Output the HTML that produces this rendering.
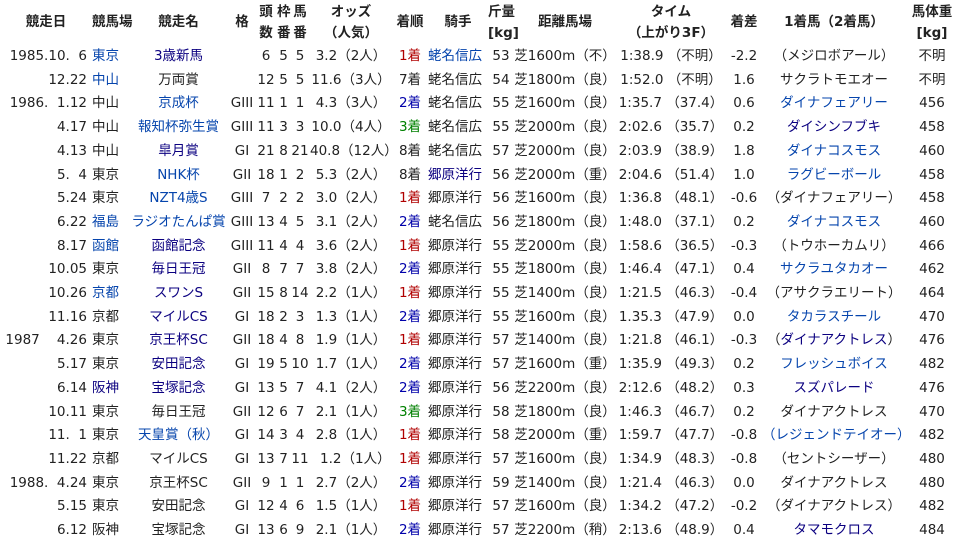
<!DOCTYPE html>
<html><head><meta charset="utf-8"><style>
body{margin:0;background:#fff;font-family:"DejaVu Sans","Noto Sans CJK JP",sans-serif;font-size:13.5px;color:#222;}
table{border-collapse:collapse;table-layout:fixed;width:958px;}
td,th{padding:0;white-space:nowrap;overflow:visible;text-align:center;}
th{height:45px;font-weight:bold;line-height:21px;}
td{height:23.7px;line-height:23.7px;}
td.d{text-align:right;padding-right:5px}
td.l{text-align:left}
.b{color:#0645ad}.v{color:#0b0080}.r{color:#b00000}.g{color:#008000}.n{color:#0000aa}
</style></head><body>
<table>
<colgroup><col style="width:92px"><col style="width:36px"><col style="width:101px"><col style="width:26px"><col style="width:22px"><col style="width:13px"><col style="width:20px"><col style="width:82px"><col style="width:36px"><col style="width:60px"><col style="width:26px"><col style="width:102px"><col style="width:110px"><col style="width:36px"><col style="width:144px"><col style="width:52px"></colgroup>
<tr><th>競走日</th><th>競馬場</th><th>競走名</th><th>格</th><th>頭<br>数</th><th>枠<br>番</th><th>馬<br>番</th><th>オッズ<br>（人気）</th><th>着順</th><th>騎手</th><th>斤量<br>[kg]</th><th>距離馬場</th><th>タイム<br>（上がり3F）</th><th>着差</th><th>1着馬（2着馬）</th><th>馬体重<br>[kg]</th></tr>
<tr><td class="d">1985.10.&nbsp;&nbsp;6</td><td class="l b">東京</td><td class="v">3歳新馬</td><td></td><td>6</td><td>5</td><td>5</td><td>3.2（2人）</td><td class="r">1着</td><td class="l b">蛯名信広</td><td>53</td><td>芝1600m（不）</td><td>1:38.9 （不明）</td><td>-2.2</td><td>（メジロボアール）</td><td>不明</td></tr>
<tr><td class="d">12.22</td><td class="l b">中山</td><td>万両賞</td><td></td><td>12</td><td>5</td><td>5</td><td>11.6（3人）</td><td>7着</td><td class="l">蛯名信広</td><td>54</td><td>芝1800m（良）</td><td>1:52.0 （不明）</td><td>1.6</td><td>サクラトモエオー</td><td>不明</td></tr>
<tr><td class="d">1986.&nbsp;&nbsp;1.12</td><td class="l">中山</td><td class="b">京成杯</td><td>GIII</td><td>11</td><td>1</td><td>1</td><td>4.3（3人）</td><td class="n">2着</td><td class="l">蛯名信広</td><td>55</td><td>芝1600m（良）</td><td>1:35.7 （37.4）</td><td>0.6</td><td class="b">ダイナフェアリー</td><td>456</td></tr>
<tr><td class="d">4.17</td><td class="l">中山</td><td class="b">報知杯弥生賞</td><td>GIII</td><td>11</td><td>3</td><td>3</td><td>10.0（4人）</td><td class="g">3着</td><td class="l">蛯名信広</td><td>55</td><td>芝2000m（良）</td><td>2:02.6 （35.7）</td><td>0.2</td><td class="v">ダイシンフブキ</td><td>458</td></tr>
<tr><td class="d">4.13</td><td class="l">中山</td><td class="v">皐月賞</td><td>GI</td><td>21</td><td>8</td><td>21</td><td>40.8（12人）</td><td>8着</td><td class="l">蛯名信広</td><td>57</td><td>芝2000m（良）</td><td>2:03.9 （38.9）</td><td>1.8</td><td class="b">ダイナコスモス</td><td>460</td></tr>
<tr><td class="d">5.&nbsp;&nbsp;4</td><td class="l">東京</td><td class="b">NHK杯</td><td>GII</td><td>18</td><td>1</td><td>2</td><td>5.3（2人）</td><td>8着</td><td class="l v">郷原洋行</td><td>56</td><td>芝2000m（重）</td><td>2:04.6 （51.4）</td><td>1.0</td><td class="b">ラグビーボール</td><td>458</td></tr>
<tr><td class="d">5.24</td><td class="l">東京</td><td class="b">NZT4歳S</td><td>GIII</td><td>7</td><td>2</td><td>2</td><td>3.0（2人）</td><td class="r">1着</td><td class="l">郷原洋行</td><td>56</td><td>芝1600m（良）</td><td>1:36.8 （48.1）</td><td>-0.6</td><td>（ダイナフェアリー）</td><td>458</td></tr>
<tr><td class="d">6.22</td><td class="l b">福島</td><td class="b">ラジオたんぱ賞</td><td>GIII</td><td>13</td><td>4</td><td>5</td><td>3.1（2人）</td><td class="n">2着</td><td class="l">蛯名信広</td><td>56</td><td>芝1800m（良）</td><td>1:48.0 （37.1）</td><td>0.2</td><td class="b">ダイナコスモス</td><td>460</td></tr>
<tr><td class="d">8.17</td><td class="l b">函館</td><td class="v">函館記念</td><td>GIII</td><td>11</td><td>4</td><td>4</td><td>3.6（2人）</td><td class="r">1着</td><td class="l">郷原洋行</td><td>55</td><td>芝2000m（良）</td><td>1:58.6 （36.5）</td><td>-0.3</td><td>（トウホーカムリ）</td><td>466</td></tr>
<tr><td class="d">10.05</td><td class="l">東京</td><td class="v">毎日王冠</td><td>GII</td><td>8</td><td>7</td><td>7</td><td>3.8（2人）</td><td class="n">2着</td><td class="l">郷原洋行</td><td>55</td><td>芝1800m（良）</td><td>1:46.4 （47.1）</td><td>0.4</td><td class="b">サクラユタカオー</td><td>462</td></tr>
<tr><td class="d">10.26</td><td class="l b">京都</td><td class="v">スワンS</td><td>GII</td><td>15</td><td>8</td><td>14</td><td>2.2（1人）</td><td class="r">1着</td><td class="l">郷原洋行</td><td>55</td><td>芝1400m（良）</td><td>1:21.5 （46.3）</td><td>-0.4</td><td>（アサクラエリート）</td><td>464</td></tr>
<tr><td class="d">11.16</td><td class="l">京都</td><td class="v">マイルCS</td><td>GI</td><td>18</td><td>2</td><td>3</td><td>1.3（1人）</td><td class="n">2着</td><td class="l">郷原洋行</td><td>55</td><td>芝1600m（良）</td><td>1.35.3 （47.9）</td><td>0.0</td><td class="b">タカラスチール</td><td>470</td></tr>
<tr><td class="d">1987&nbsp;&nbsp;&nbsp;&nbsp;4.26</td><td class="l">東京</td><td class="v">京王杯SC</td><td>GII</td><td>18</td><td>4</td><td>8</td><td>1.9（1人）</td><td class="r">1着</td><td class="l">郷原洋行</td><td>57</td><td>芝1400m（良）</td><td>1:21.8 （46.1）</td><td>-0.3</td><td>（<span class="v">ダイナアクトレス</span>）</td><td>476</td></tr>
<tr><td class="d">5.17</td><td class="l">東京</td><td class="v">安田記念</td><td>GI</td><td>19</td><td>5</td><td>10</td><td>1.7（1人）</td><td class="n">2着</td><td class="l">郷原洋行</td><td>57</td><td>芝1600m（重）</td><td>1:35.9 （49.3）</td><td>0.2</td><td class="b">フレッシュボイス</td><td>482</td></tr>
<tr><td class="d">6.14</td><td class="l v">阪神</td><td class="v">宝塚記念</td><td>GI</td><td>13</td><td>5</td><td>7</td><td>4.1（2人）</td><td class="n">2着</td><td class="l">郷原洋行</td><td>56</td><td>芝2200m（良）</td><td>2:12.6 （48.2）</td><td>0.3</td><td class="v">スズパレード</td><td>476</td></tr>
<tr><td class="d">10.11</td><td class="l">東京</td><td>毎日王冠</td><td>GII</td><td>12</td><td>6</td><td>7</td><td>2.1（1人）</td><td class="g">3着</td><td class="l">郷原洋行</td><td>58</td><td>芝1800m（良）</td><td>1:46.3 （46.7）</td><td>0.2</td><td>ダイナアクトレス</td><td>470</td></tr>
<tr><td class="d">11.&nbsp;&nbsp;1</td><td class="l">東京</td><td class="b">天皇賞（秋）</td><td>GI</td><td>14</td><td>3</td><td>4</td><td>2.8（1人）</td><td class="r">1着</td><td class="l">郷原洋行</td><td>58</td><td>芝2000m（重）</td><td>1:59.7 （47.7）</td><td>-0.8</td><td class="b">（レジェンドテイオー）</td><td>482</td></tr>
<tr><td class="d">11.22</td><td class="l">京都</td><td>マイルCS</td><td>GI</td><td>13</td><td>7</td><td>11</td><td>&nbsp;&nbsp;1.2（1人）</td><td class="r">1着</td><td class="l">郷原洋行</td><td>57</td><td>芝1600m（良）</td><td>1:34.9 （48.3）</td><td>-0.8</td><td>（セントシーザー）</td><td>480</td></tr>
<tr><td class="d">1988.&nbsp;&nbsp;4.24</td><td class="l">東京</td><td>京王杯SC</td><td>GII</td><td>9</td><td>1</td><td>1</td><td>2.7（2人）</td><td class="n">2着</td><td class="l">郷原洋行</td><td>59</td><td>芝1400m（良）</td><td>1:21.4 （46.3）</td><td>0.0</td><td>ダイナアクトレス</td><td>480</td></tr>
<tr><td class="d">5.15</td><td class="l">東京</td><td>安田記念</td><td>GI</td><td>12</td><td>4</td><td>6</td><td>1.5（1人）</td><td class="r">1着</td><td class="l">郷原洋行</td><td>57</td><td>芝1600m（良）</td><td>1:34.2 （47.2）</td><td>-0.2</td><td>（ダイナアクトレス）</td><td>482</td></tr>
<tr><td class="d">6.12</td><td class="l">阪神</td><td>宝塚記念</td><td>GI</td><td>13</td><td>6</td><td>9</td><td>2.1（1人）</td><td class="n">2着</td><td class="l">郷原洋行</td><td>57</td><td>芝2200m（稍）</td><td>2:13.6 （48.9）</td><td>0.4</td><td class="v">タマモクロス</td><td>484</td></tr>
</table>
</body></html>
